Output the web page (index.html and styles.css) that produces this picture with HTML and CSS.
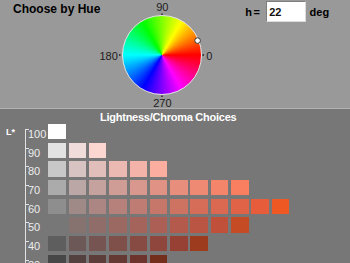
FILE: index.html
```html
<!DOCTYPE html>
<html lang="en">
<head>
    <meta charset="UTF-8">
    <title>Choose by Hue</title>
    <link rel="stylesheet" href="styles.css">
</head>
<body>
    <section class="hue-panel">
        <h1 class="hue-panel__title">Choose by Hue</h1>
        <div class="wheel-box">
            <span class="wheel-box__label wheel-box__label--top">90</span>
            <span class="wheel-box__label wheel-box__label--left">180</span>
            <div class="wheel">
                <svg class="wheel__overlay" viewBox="0 0 88 88" aria-hidden="true">
                    <path d="M44 2.4V4M1 44H2.6M84.4 44H86M44 84.4V86" />
                    <circle class="wheel__marker" cx="79.6" cy="29.6" r="2.8" />
                </svg>
            </div>
            <span class="wheel-box__label wheel-box__label--right">0</span>
            <span class="wheel-box__label wheel-box__label--bottom">270</span>
        </div>
        <div class="hue-field">
            <label class="hue-field__label" for="hue">h =</label>
            <input class="hue-field__input" id="hue" type="text" value="22">
            <span class="hue-field__unit">deg</span>
        </div>
    </section>

    <section class="choices">
        <h2 class="choices__title">Lightness/Chroma Choices</h2>
        <div class="chart">
            <div class="chart__unit">L*</div>
            <ol class="chart__axis">
                <li class="chart__level">100</li>
                <li class="chart__level">90</li>
                <li class="chart__level">80</li>
                <li class="chart__level">70</li>
                <li class="chart__level">60</li>
                <li class="chart__level">50</li>
                <li class="chart__level">40</li>
                <li class="chart__level">30</li>
            </ol>
            <div class="chart__grid">
                <div class="chart__row">
                    <span class="swatch" style="background:#ffffff"></span>
                </div>
                <div class="chart__row">
                    <span class="swatch" style="background:#e2e2e2"></span>
                    <span class="swatch" style="background:#f0dcdb"></span>
                    <span class="swatch" style="background:#fcd7d2"></span>
                </div>
                <div class="chart__row">
                    <span class="swatch" style="background:#c8c8c8"></span>
                    <span class="swatch" style="background:#d7c3c1"></span>
                    <span class="swatch" style="background:#e2beba"></span>
                    <span class="swatch" style="background:#ebb9b2"></span>
                    <span class="swatch" style="background:#f3b3a9"></span>
                    <span class="swatch" style="background:#fbad9f"></span>
                </div>
                <div class="chart__row">
                    <span class="swatch" style="background:#ababab"></span>
                    <span class="swatch" style="background:#bba7a5"></span>
                    <span class="swatch" style="background:#c6a29e"></span>
                    <span class="swatch" style="background:#d09d96"></span>
                    <span class="swatch" style="background:#d9988d"></span>
                    <span class="swatch" style="background:#e09385"></span>
                    <span class="swatch" style="background:#e78e7c"></span>
                    <span class="swatch" style="background:#ee8973"></span>
                    <span class="swatch" style="background:#f4846a"></span>
                    <span class="swatch" style="background:#fa7f60"></span>
                </div>
                <div class="chart__row">
                    <span class="swatch" style="background:#8e8e8e"></span>
                    <span class="swatch" style="background:#9f8a88"></span>
                    <span class="swatch" style="background:#ab8682"></span>
                    <span class="swatch" style="background:#b5817a"></span>
                    <span class="swatch" style="background:#bf7c72"></span>
                    <span class="swatch" style="background:#c7776a"></span>
                    <span class="swatch" style="background:#ce7262"></span>
                    <span class="swatch" style="background:#d56d59"></span>
                    <span class="swatch" style="background:#db6850"></span>
                    <span class="swatch" style="background:#e16347"></span>
                    <span class="swatch" style="background:#e75d3c"></span>
                    <span class="swatch" style="background:#ee5822"></span>
                </div>
                <div class="chart__row">
                    <span class="swatch" style="background:#777777"></span>
                    <span class="swatch" style="background:#86726f"></span>
                    <span class="swatch" style="background:#916d69"></span>
                    <span class="swatch" style="background:#9b6962"></span>
                    <span class="swatch" style="background:#a4645b"></span>
                    <span class="swatch" style="background:#ac5f54"></span>
                    <span class="swatch" style="background:#b35a4c"></span>
                    <span class="swatch" style="background:#ba5544"></span>
                    <span class="swatch" style="background:#c0503a"></span>
                    <span class="swatch" style="background:#c54b24"></span>
                </div>
                <div class="chart__row">
                    <span class="swatch" style="background:#5e5e5e"></span>
                    <span class="swatch" style="background:#6b5857"></span>
                    <span class="swatch" style="background:#765451"></span>
                    <span class="swatch" style="background:#7f4f4a"></span>
                    <span class="swatch" style="background:#874b43"></span>
                    <span class="swatch" style="background:#8f463c"></span>
                    <span class="swatch" style="background:#964134"></span>
                    <span class="swatch" style="background:#9d3b1e"></span>
                </div>
                <div class="chart__row">
                    <span class="swatch" style="background:#474747"></span>
                    <span class="swatch" style="background:#534140"></span>
                    <span class="swatch" style="background:#5c3d3a"></span>
                    <span class="swatch" style="background:#643934"></span>
                    <span class="swatch" style="background:#6c342d"></span>
                    <span class="swatch" style="background:#742f1c"></span>
                </div>
            </div>
        </div>
    </section>
</body>
</html>
```

FILE: styles.css
```css
body {
    margin: 0;
    width: 350px;
    height: 263px;
    overflow: hidden;

    background: #777777;

    font-family: "Liberation Sans", Arial, sans-serif;
}

/* top: hue wheel */

.hue-panel {
    height: 108px;

    box-sizing: border-box;

    display: flex;
    align-items: flex-start;

    background: #999999;
}

.hue-panel__title {
    flex: 0 0 96.6px;

    margin: 0;
    padding: 2px 0 0 13px;

    box-sizing: border-box;

    white-space: nowrap;

    font-size: 12px;
    font-weight: 700;
    line-height: 14px;

    color: #000000;
}

.wheel-box {
    flex: 0 0 auto;

    display: grid;
    grid-template-columns: 22px 80px 11px;
    grid-template-rows: 15px 80px 13px;
}

.wheel-box__label {
    font-size: 11px;
    line-height: 12px;

    color: #1c1c1c;
}

.wheel-box__label--top {
    grid-column: 2;
    grid-row: 1;

    justify-self: center;
    align-self: start;

    padding-top: 1px;
}

.wheel-box__label--left {
    grid-column: 1;
    grid-row: 2;

    justify-self: end;
    align-self: center;

    padding: 2px 4.6px 0 0;
}

.wheel-box__label--right {
    grid-column: 3;
    grid-row: 2;

    justify-self: start;
    align-self: center;

    padding: 2px 0 0 4px;
}

.wheel-box__label--bottom {
    grid-column: 2;
    grid-row: 3;

    justify-self: center;
    align-self: start;

    padding-top: 2px;
}

.wheel {
    grid-column: 2;
    grid-row: 2;

    position: relative;

    box-sizing: border-box;
    border: 1px solid #e4e4e4;
    border-radius: 50%;

    /* hue 0 at the right, counter-clockwise */
    background: conic-gradient(from 90deg,
        #ff0000, #ff00ff 60deg, #0000ff 120deg, #00ffff 180deg,
        #00ff00 240deg, #ffff00 300deg, #ff0000 360deg);
}

.wheel__overlay {
    position: absolute;
    left: -5px;
    top: -5px;

    width: 88px;
    height: 88px;

    overflow: visible;

    fill: none;
    stroke: #222222;
    stroke-width: 1.4;
}

.wheel__marker {
    fill: #ffffff;
    stroke: #333333;
    stroke-width: 1;
}

.hue-field {
    margin-left: 32px;
    padding-top: 1px;

    display: flex;
    align-items: center;

    font-size: 11px;
    font-weight: 700;

    color: #000000;
}

.hue-field__label {
    margin-right: 7px;
    letter-spacing: -0.8px;
}

.hue-field__input {
    width: 40px;
    height: 21px;

    box-sizing: border-box;
    margin: 0;
    padding: 0 2px;

    border: 1px solid;
    border-color: #7e7e7e #dcdcdc #dcdcdc #7e7e7e;
    border-radius: 0;

    background: #ffffff;

    font-family: inherit;
    font-size: 11px;
    font-weight: 700;

    color: #111111;
}

.hue-field__unit {
    margin-left: 3.4px;
}

/* bottom: lightness / chroma grid */

.choices {
    border-top: 1px solid #b2b2b2;
    padding-top: 2.2px;

    background: #777777;
}

.choices__title {
    margin: 0 0 0 100px;

    font-size: 11px;
    font-weight: 700;
    line-height: 12px;
    letter-spacing: -0.25px;

    color: #ffffff;
}

.chart {
    margin-top: 0.8px;
    padding-left: 6px;

    display: flex;
    align-items: flex-start;
}

.chart__unit {
    flex: 0 0 19px;

    padding-top: 3px;

    font-size: 9px;
    font-weight: 700;
    line-height: 10px;

    color: #ffffff;
}

.chart__axis {
    flex: 0 0 23.3px;

    box-sizing: border-box;
    margin: 5px 0 0;
    padding: 0 0 0 2px;
    list-style: none;

    border-left: 1px solid #e2e2e2;
}

.chart__level {
    height: 18.67px;

    position: relative;

    font-size: 11px;
    line-height: 11px;

    color: #ececec;
}

.chart__level::before {
    position: absolute;
    left: -2px;
    top: 0;

    content: '';

    width: 3px;
    height: 1px;

    background: #e2e2e2;
}

.chart__grid {
    display: flex;
    flex-direction: column;
    gap: 3.33px;
}

.chart__row {
    display: flex;
    gap: 2.93px;
}

.swatch {
    flex: none;

    width: 17.4px;
    height: 15.33px;
}
```
